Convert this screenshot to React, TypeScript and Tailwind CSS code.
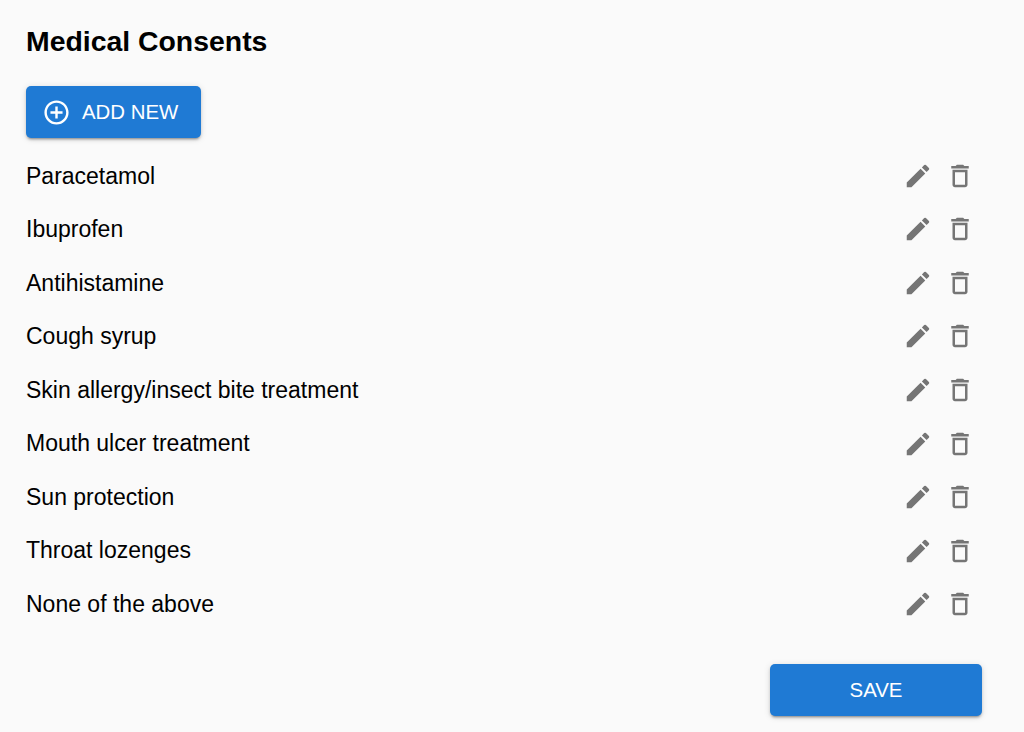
const consents = [
  'Paracetamol',
  'Ibuprofen',
  'Antihistamine',
  'Cough syrup',
  'Skin allergy/insect bite treatment',
  'Mouth ulcer treatment',
  'Sun protection',
  'Throat lozenges',
  'None of the above',
];

const buttonClass =
  'flex h-[52px] items-center rounded-[5px] bg-[#1f7ad4] text-[20.4px] text-white shadow-[0_3px_2px_-2px_rgba(0,0,0,0.25),0_2px_3px_0_rgba(0,0,0,0.16),0_1px_7px_0_rgba(0,0,0,0.12)]';

function EditIcon() {
  return (
    <svg viewBox="0 0 24 24" className="size-[30px] fill-[#757575]">
      <path d="M3 17.25V21h3.75L17.81 9.94l-3.75-3.75L3 17.25zM20.71 7.04c.39-.39.39-1.02 0-1.41l-2.34-2.34a.9959.9959 0 0 0-1.41 0l-1.83 1.83 3.75 3.75 1.83-1.83z" />
    </svg>
  );
}

function DeleteIcon() {
  return (
    <svg viewBox="0 0 24 24" className="size-[30px] fill-[#757575]">
      <path d="M6 19c0 1.1.9 2 2 2h8c1.1 0 2-.9 2-2V7H6v12zM8 9h8v10H8V9zm7.5-5l-1-1h-5l-1 1H5v2h14V4h-3.5z" />
    </svg>
  );
}

export default function App() {
  return (
    <div className="h-[732px] overflow-hidden bg-[#fafafa] pl-[26px] pr-[42px] pt-[25px] font-['Liberation_Sans',Arial,sans-serif] text-black">
      <h1 className="text-[28.4px] font-bold leading-[33px]">Medical Consents</h1>

      <button className={`${buttonClass} mt-[28px] w-[175px] pl-[16px]`}>
        <svg viewBox="0 0 24 24" className="size-[29px] fill-white">
          <path d="M13 7h-2v4H7v2h4v4h2v-4h4v-2h-4V7zm-1-5C6.48 2 2 6.48 2 12s4.48 10 10 10 10-4.48 10-10S17.52 2 12 2zm0 18c-4.41 0-8-3.59-8-8s3.59-8 8-8 8 3.59 8 8-3.59 8-8 8z" />
        </svg>
        <span className="ml-[11px]">ADD NEW</span>
      </button>

      <ul className="mt-[11px]">
        {consents.map((name) => (
          <li key={name} className="flex h-[53.55px] items-center justify-between text-[23px]">
            <span>{name}</span>
            <span className="mr-[7px] flex gap-[12px]">
              <EditIcon />
              <DeleteIcon />
            </span>
          </li>
        ))}
      </ul>

      <div className="mt-[33.5px] flex justify-end">
        <button className={`${buttonClass} w-[212px] justify-center`}>SAVE</button>
      </div>
    </div>
  );
}
